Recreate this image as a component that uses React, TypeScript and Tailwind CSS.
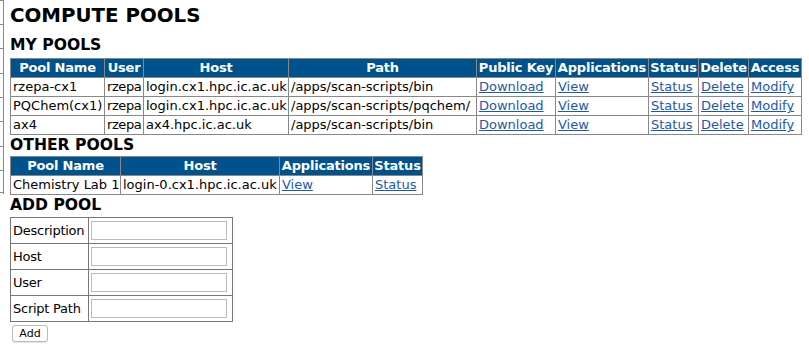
import React from "react";

const myPools = [
  { name: "rzepa-cx1", user: "rzepa", host: "login.cx1.hpc.ic.ac.uk", path: "/apps/scan-scripts/bin" },
  { name: "PQChem(cx1)", user: "rzepa", host: "login.cx1.hpc.ic.ac.uk", path: "/apps/scan-scripts/pqchem/" },
  { name: "ax4", user: "rzepa", host: "ax4.hpc.ic.ac.uk", path: "/apps/scan-scripts/bin" },
];

const th = "border border-[#888] bg-[#00528c] text-white font-bold text-center px-0 py-0 leading-[18px] whitespace-nowrap tracking-[-0.2px]";
const td = "border border-[#888] pl-[2px] pr-0 py-0 leading-[18px] whitespace-nowrap";
const link = "text-[#1c5aa6] underline";

const Heading = ({ children, big }: { children: React.ReactNode; big?: boolean }) => (
  <h2 className={big ? "text-[19.8px] font-bold leading-[26px] pt-[3px]" : "text-[15.6px] font-bold leading-[20px]"}>
    {children}
  </h2>
);

export default function App() {
  return (
    <div className="flex min-h-[346px] bg-white text-black text-[13px]" style={{ fontFamily: '"DejaVu Sans", Verdana, sans-serif' }}>
      <div className="w-[4px] shrink-0 h-[194px] border-r border-t border-[#888] flex flex-col">
        {[24, 24, 25, 24, 24, 25, 24, 22].map((h, i) => (
          <div key={i} className="border-b border-[#888]" style={{ height: h }} />
        ))}
      </div>
      <div className="ml-[6px] flex flex-col items-start">
        <Heading big>COMPUTE POOLS</Heading>
        <div className="mt-[6px]"><Heading>MY POOLS</Heading></div>
        <table className="border-collapse border border-[#555] mt-[3px]">
          <thead>
            <tr>
              <th className={`${th} w-[94px]`}>Pool Name</th>
              <th className={`${th} w-[39px]`}>User</th>
              <th className={`${th} w-[145px]`}>Host</th>
              <th className={`${th} w-[188px]`}>Path</th>
              <th className={`${th} w-[79px]`}>Public Key</th>
              <th className={`${th} w-[93px]`}>Applications</th>
              <th className={`${th} w-[50px]`}>Status</th>
              <th className={`${th} w-[50px]`}>Delete</th>
              <th className={`${th} w-[53px]`}>Access</th>
            </tr>
          </thead>
          <tbody>
            {myPools.map((p) => (
              <tr key={p.name}>
                <td className={td}>{p.name}</td>
                <td className={`${td} tracking-[-0.4px]`}>{p.user}</td>
                <td className={td}>{p.host}</td>
                <td className={td}>{p.path}</td>
                <td className={td}><a href="#" className={link}>Download</a></td>
                <td className={td}><a href="#" className={link}>View</a></td>
                <td className={td}><a href="#" className={link}>Status</a></td>
                <td className={td}><a href="#" className={link}>Delete</a></td>
                <td className={td}><a href="#" className={link}>Modify</a></td>
              </tr>
            ))}
          </tbody>
        </table>
        <Heading>OTHER POOLS</Heading>
        <table className="border-collapse border border-[#555] mt-[1px]">
          <thead>
            <tr>
              <th className={`${th} w-[110px]`}>Pool Name</th>
              <th className={`${th} w-[159px]`}>Host</th>
              <th className={`${th} w-[93px]`}>Applications</th>
              <th className={`${th} w-[50px]`}>Status</th>
            </tr>
          </thead>
          <tbody>
            <tr>
              <td className={td}>Chemistry Lab 1</td>
              <td className={td}>login-0.cx1.hpc.ic.ac.uk</td>
              <td className={td}><a href="#" className={link}>View</a></td>
              <td className={td}><a href="#" className={link}>Status</a></td>
            </tr>
          </tbody>
        </table>
        <Heading>ADD POOL</Heading>
        <table className="border-collapse border border-[#333] mt-[2px]">
          <tbody>
            {["Description", "Host", "User", "Script Path"].map((label) => (
              <tr key={label} className="h-[26px]">
                <td className="border border-[#777] pl-[2px] pr-0 py-0 whitespace-nowrap w-[78px] tracking-[-0.25px]">{label}</td>
                <td className="border border-[#777] px-[2px] py-0 w-[144px]">
                  <input type="text" className="block w-[136px] h-[19px] border border-[#bbb] bg-white" />
                </td>
              </tr>
            ))}
          </tbody>
        </table>
        <button className="mt-[3px] ml-[2px] w-[36px] h-[17px] text-[11px] leading-[15px] border border-[#bbb] rounded-[3px] bg-white shadow-[0_1px_1px_rgba(0,0,0,0.1)]">
          Add
        </button>
      </div>
    </div>
  );
}
